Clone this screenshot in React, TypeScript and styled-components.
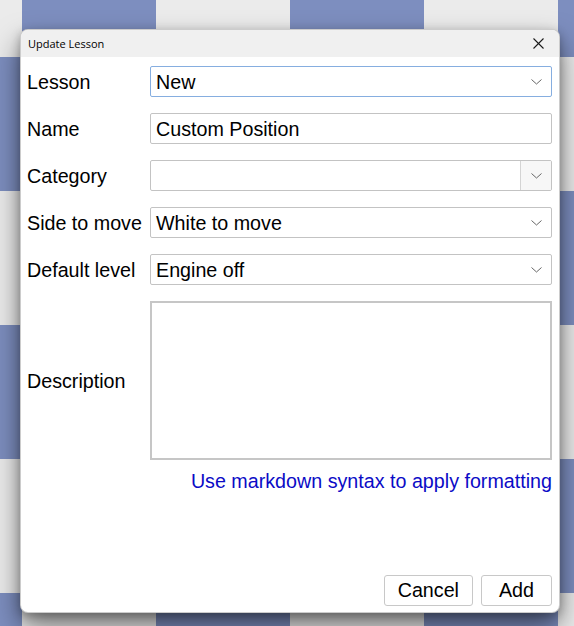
import React from "react";
import styled, { createGlobalStyle } from "styled-components";

const BLUE = "#7d8ebf";
const LIGHT = "#ebebeb";

const GlobalStyle = createGlobalStyle`
  html, body {
    margin: 0;
    padding: 0;
    width: 100%;
    height: 100%;
    overflow: hidden;
  }
  body {
    background-color: ${LIGHT};
    background-image: conic-gradient(${BLUE} 0 25%, ${LIGHT} 0 50%, ${BLUE} 0 75%, ${LIGHT} 0);
    background-size: 268px 268px;
    background-position: -112px -77px;
  }
  #root {
    height: 100%;
  }
`;

const Desktop = styled.div`
  box-sizing: border-box;
  height: 100%;
  padding: 29px 0 0 20px;
  font-family: "Liberation Sans", Arial, sans-serif;
`;

const Dialog = styled.div`
  box-sizing: border-box;
  width: 540px;
  height: 584px;
  display: flex;
  flex-direction: column;
  background: #ffffff;
  border: 1px solid rgba(0, 0, 0, 0.2);
  border-radius: 8px;
  overflow: hidden;
  box-shadow: 0 14px 28px rgba(0, 0, 0, 0.5), 0 3px 10px rgba(0, 0, 0, 0.25);
`;

const TitleBar = styled.div`
  height: 27px;
  flex: none;
  display: flex;
  align-items: center;
  justify-content: space-between;
  padding: 0 15px 0 7px;
  background: #f0f0f0;
`;

const Title = styled.span`
  font-family: "Open Sans", "Noto Sans", sans-serif;
  font-size: 11px;
  color: #000;
  line-height: 1;
`;

const CloseButton = styled.button`
  border: none;
  background: transparent;
  padding: 0;
  width: 12px;
  height: 12px;
  display: flex;
  align-items: center;
  justify-content: center;
  cursor: default;
`;

const Body = styled.div`
  flex: 1;
  display: flex;
  flex-direction: column;
  padding: 9px 7px 6px 6px;
`;

const Form = styled.div`
  display: flex;
  flex-direction: column;
  gap: 16px;
`;

const Row = styled.div`
  display: flex;
  align-items: center;
`;

const Label = styled.label`
  width: 123px;
  flex: none;
  font-size: 19.7px;
  color: #000;
  line-height: 22px;
`;

const FieldBox = styled.div<{ $focused?: boolean }>`
  box-sizing: border-box;
  flex: 1;
  height: 31px;
  display: flex;
  align-items: center;
  border: 1px solid ${(p) => (p.$focused ? "#86aee0" : "#c3c3c3")};
  border-radius: 2px;
  background: #fff;
  overflow: hidden;
`;

const FieldText = styled.span`
  flex: 1;
  padding-left: 5px;
  font-size: 19.7px;
  line-height: 22px;
  color: #000;
  white-space: nowrap;
`;

const ChevronSlot = styled.span<{ $button?: boolean }>`
  flex: none;
  width: 30px;
  align-self: stretch;
  display: flex;
  align-items: center;
  justify-content: center;
  background: ${(p) => (p.$button ? "#f7f7f7" : "transparent")};
  border-left: 1px solid ${(p) => (p.$button ? "#d4d4d4" : "transparent")};
`;

const TextArea = styled.div`
  box-sizing: border-box;
  flex: 1;
  height: 159px;
  border: 2px solid #c6c6c6;
  background: #fff;
`;

const Hint = styled.div`
  margin-top: 10px;
  text-align: right;
  font-size: 19.7px;
  line-height: 22px;
  color: #0b0bc6;
`;

const Footer = styled.div`
  margin-top: auto;
  display: flex;
  justify-content: flex-end;
  gap: 8px;
`;

const Button = styled.button`
  box-sizing: border-box;
  height: 31px;
  min-width: 71px;
  padding: 0 13px;
  border: 1px solid #c8c8c8;
  border-radius: 3px;
  background: #fff;
  font-family: "Liberation Sans", Arial, sans-serif;
  font-size: 19.7px;
  color: #000;
  cursor: default;
`;

const Chevron = () => (
  <svg width="11" height="6" viewBox="0 0 11 6" fill="none">
    <polyline points="0.5,0.5 5.5,5 10.5,0.5" stroke="#666" strokeWidth="1" />
  </svg>
);

const CloseIcon = () => (
  <svg width="11" height="11" viewBox="0 0 11 11" fill="none">
    <line x1="0.5" y1="0.5" x2="10.5" y2="10.5" stroke="#1a1a1a" strokeWidth="1.1" />
    <line x1="10.5" y1="0.5" x2="0.5" y2="10.5" stroke="#1a1a1a" strokeWidth="1.1" />
  </svg>
);

type ComboProps = { value: string; focused?: boolean; editable?: boolean };

const Combo = ({ value, focused, editable }: ComboProps) => (
  <FieldBox $focused={focused}>
    <FieldText>{value}</FieldText>
    <ChevronSlot $button={editable}>
      <Chevron />
    </ChevronSlot>
  </FieldBox>
);

export default function App() {
  return (
    <>
      <GlobalStyle />
      <Desktop>
        <Dialog>
          <TitleBar>
            <Title>Update Lesson</Title>
            <CloseButton aria-label="Close">
              <CloseIcon />
            </CloseButton>
          </TitleBar>
          <Body>
            <Form>
              <Row>
                <Label>Lesson</Label>
                <Combo value="New" focused />
              </Row>
              <Row>
                <Label>Name</Label>
                <FieldBox>
                  <FieldText>Custom Position</FieldText>
                </FieldBox>
              </Row>
              <Row>
                <Label>Category</Label>
                <Combo value="" editable />
              </Row>
              <Row>
                <Label>Side to move</Label>
                <Combo value="White to move" />
              </Row>
              <Row>
                <Label>Default level</Label>
                <Combo value="Engine off" />
              </Row>
              <Row>
                <Label>Description</Label>
                <TextArea />
              </Row>
            </Form>
            <Hint>Use markdown syntax to apply formatting</Hint>
            <Footer>
              <Button>Cancel</Button>
              <Button>Add</Button>
            </Footer>
          </Body>
        </Dialog>
      </Desktop>
    </>
  );
}
